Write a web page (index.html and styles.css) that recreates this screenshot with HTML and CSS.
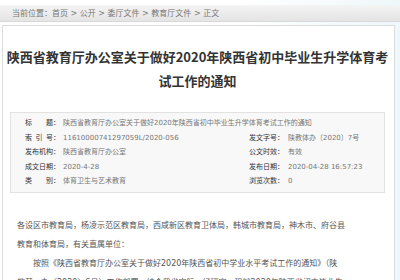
FILE: index.html
```html
<!DOCTYPE html>
<html lang="zh-CN">
<head>
    <meta charset="UTF-8">
    <title>陕西省教育厅办公室关于做好2020年陕西省初中毕业生升学体育考试工作的通知</title>
    <link rel="stylesheet" href="styles.css">
</head>
<body>
    <div class="crumb">当前位置：首页 &gt; 公开 &gt; 委厅文件 &gt; 教育厅文件 &gt; 正文</div>

    <div class="main">
        <h1 class="title">陕西省教育厅办公室关于做好2020年陕西省初中毕业生升学体育考试工作的通知</h1>

        <!-- Document info -->
        <div class="info">
            <div class="label"><span class="k">标题</span>：</div>
            <div class="value wide">陕西省教育厅办公室关于做好2020年陕西省初中毕业生升学体育考试工作的通知</div>

            <div class="label"><span class="k">索引号</span>：</div>
            <div class="value">11610000741297059L/2020-056</div>
            <div class="label"><span class="k">发文字号</span>：</div>
            <div class="value">陕教体办〔2020〕7号</div>

            <div class="label"><span class="k">发布机构</span>：</div>
            <div class="value">陕西省教育厅办公室</div>
            <div class="label"><span class="k">公文时效</span>：</div>
            <div class="value">有效</div>

            <div class="label"><span class="k">成文日期</span>：</div>
            <div class="value">2020-4-28</div>
            <div class="label"><span class="k">发布日期</span>：</div>
            <div class="value">2020-04-28 16:57:23</div>

            <div class="label"><span class="k">类别</span>：</div>
            <div class="value">体育卫生与艺术教育</div>
            <div class="label"><span class="k">浏览次数</span>：</div>
            <div class="value">0</div>
        </div>

        <!-- Body text -->
        <div class="content">
            <p class="noindent">各设区市教育局，杨凌示范区教育局，西咸新区教育卫体局，韩城市教育局，神木市、府谷县<br>教育和体育局，有关直属单位：</p>
            <p>按照《陕西省教育厅办公室关于做好2020年陕西省初中学业水平考试工作的通知》（陕<br>教基一办〔2020〕6号）工作部署，结合我省实际，经研究，现就2020年陕西省初中毕业生<br>升学体育考试工作通知如下。</p>
        </div>
    </div>
</body>
</html>
```

FILE: styles.css
```css
/* Reset and base styles */
* {
    margin: 0;
    padding: 0;
    box-sizing: border-box;
}

body {
    font-family: "DejaVu Sans", "Noto Sans CJK SC", sans-serif;
    background: linear-gradient(90deg, #ffffff 60%, #eef7fa 100%);
    color: #555;
    height: 280px;
    overflow: hidden;
}

/* Breadcrumb bar */
.crumb {
    margin-top: 5px;
    height: 17px;
    line-height: 17px;
    padding-left: 12px;
    font-size: 8px;
    color: #777;
    background: linear-gradient(#f4f4f4, #e4e4e4);
    border-bottom: 1px solid #d8d8d8;
}

/* Content panel */
.main {
    margin: 3px 5px 0 2px;
    padding: 19px 9px 0 7px;
    background-color: #fff;
    border: 1px solid #dcdcdc;
    border-bottom: none;
    height: 260px;
}

.title {
    margin: 0 -6px;
    font-family: "Noto Sans CJK SC", sans-serif;
    font-size: 13px;
    line-height: 24px;
    font-weight: bold;
    color: #333;
    text-align: center;
}

/* Info table */
.info {
    margin-top: 19px;
    padding: 3px 0 3px 14px;
    background-color: #f8f8f8;
    border: 1px solid #e2e2e2;
    display: grid;
    grid-template-columns: 38px 186px 39px 1fr;
    font-size: 7px;
    line-height: 14.6px;
    white-space: nowrap;
}

.label {
    display: flex;
    color: #333;
}

.label .k {
    width: 28px;
    text-align-last: justify;
}

.value {
    color: #777;
}

.value.wide {
    grid-column: 2 / 5;
}

/* Body text */
.content {
    margin-top: 23px;
    padding: 0 10px 0 7px;
    font-size: 8px;
    line-height: 19px;
    color: #555;
    white-space: nowrap;
}

.content p {
    text-indent: 2em;
}

.content p.noindent {
    text-indent: 0;
}
```
